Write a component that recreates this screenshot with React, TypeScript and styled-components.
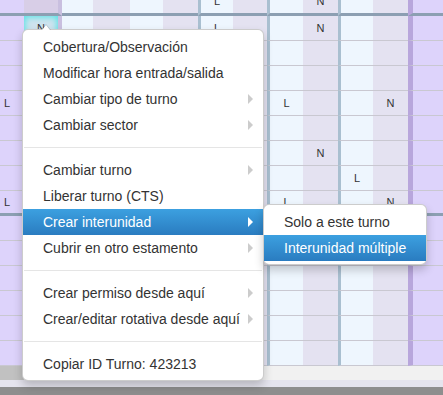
import React from 'react';
import styled, { createGlobalStyle, css } from 'styled-components';

type Tone = 'purple' | 'mauve' | 'blue' | 'lav';

interface Column {
  w: number;
  tone: Tone;
  line?: number;
  lineColor?: string;
  lineRight?: boolean;
}

interface Row {
  h: number;
  border: number;
  thick?: boolean;
}

const toneColors: Record<Tone, string> = {
  purple: '#ddd3fb',
  mauve: '#d8cee7',
  blue: '#eef6fe',
  lav: '#e4e2f1',
};

const columns: Column[] = [
  { w: 24, tone: 'purple' },
  { w: 38, tone: 'mauve', line: 4, lineColor: '#c9bfdf', lineRight: true },
  { w: 31, tone: 'blue' },
  { w: 37, tone: 'lav' },
  { w: 33, tone: 'blue' },
  { w: 35, tone: 'lav' },
  { w: 35, tone: 'blue', line: 3, lineColor: '#a9bfd0' },
  { w: 34, tone: 'lav' },
  { w: 36, tone: 'blue', line: 3, lineColor: '#a9bfd0' },
  { w: 35, tone: 'lav' },
  { w: 35, tone: 'blue', line: 3, lineColor: '#a9bfd0' },
  { w: 35, tone: 'lav' },
  { w: 35, tone: 'purple', line: 5, lineColor: '#b8a6dc' },
];

const rows: Row[] = [
  { h: 25, border: 3, thick: true },
  ...Array.from({ length: 7 }, () => ({ h: 24, border: 1 })),
  { h: 22, border: 3, thick: true },
  ...Array.from({ length: 6 }, () => ({ h: 24, border: 1 })),
];

// row index -> column index -> letter
const marks: Record<number, Record<number, string>> = {
  0: { 6: 'L', 9: 'N' },
  1: { 1: 'N', 6: 'L', 9: 'N' },
  4: { 0: 'L', 8: 'L', 11: 'N' },
  6: { 9: 'N' },
  7: { 10: 'L' },
  8: { 0: 'L', 8: 'L', 11: 'N' },
};

const GlobalStyle = createGlobalStyle`
  html, body {
    margin: 0;
    padding: 0;
  }
  body {
    width: 443px;
    height: 395px;
    overflow: hidden;
    background: #8e8e8e;
    font-family: "Liberation Sans", Arial, sans-serif;
  }
`;

const Page = styled.div`
  position: relative;
  width: 443px;
  height: 395px;
  display: flex;
  flex-direction: column;
`;

const GridArea = styled.div`
  height: 366px;
  overflow: hidden;
`;

const Grid = styled.div`
  display: grid;
  grid-template-columns: ${columns.map((c) => `${c.w}px`).join(' ')};
  grid-template-rows: ${rows.map((r) => `${r.h + r.border}px`).join(' ')};
  margin-top: -12px;
`;

const Cell = styled.div<{
  $tone: Tone;
  $border: number;
  $thick?: boolean;
  $line?: number;
  $lineColor?: string;
  $lineRight?: boolean;
  $selected?: boolean;
  $first?: boolean;
}>`
  box-sizing: border-box;
  display: flex;
  align-items: center;
  justify-content: center;
  padding-right: ${(p) => (p.$first ? '10px' : '0')};
  background: ${(p) => toneColors[p.$tone]};
  border-bottom: ${(p) => p.$border}px solid ${(p) => (p.$thick ? '#8c9fb2' : '#c9c8d1')};
  ${(p) =>
    p.$line &&
    css`
      border-${p.$lineRight ? 'right' : 'left'}: ${p.$line}px solid ${p.$lineColor};
    `}
  font-size: 11px;
  color: #333;
  ${(p) =>
    p.$selected &&
    css`
      background: #cfe3ee;
      box-shadow: inset 0 0 6px 1px #4fe4e6;
    `}
`;

const Scrollbar = styled.div`
  height: 14px;
  background: #f1f1f1;
  display: flex;
`;

const Thumb = styled.div`
  width: 170px;
  height: 100%;
  background: #c1c1c1;
`;

const Strip = styled.div`
  height: 7px;
  background: #e5e4ee;
`;

const Footer = styled.div`
  flex: 1;
  background: #8e8e8e;
`;

const Menu = styled.ul<{ $pointer?: boolean }>`
  position: absolute;
  box-sizing: border-box;
  margin: 0;
  padding: 4px 0 3px;
  list-style: none;
  background: #fff;
  border: 1px solid rgba(0, 0, 0, 0.2);
  border-radius: 6px;
  box-shadow: 0 5px 10px rgba(0, 0, 0, 0.2);
  font-size: 14px;
  color: #333;
  z-index: 10;
  ${(p) =>
    p.$pointer &&
    css`
      &::before {
        content: '';
        position: absolute;
        top: -6px;
        left: 18px;
        border-left: 5px solid transparent;
        border-right: 5px solid transparent;
        border-bottom: 6px solid rgba(0, 0, 0, 0.15);
      }
      &::after {
        content: '';
        position: absolute;
        top: -5px;
        left: 19px;
        border-left: 4px solid transparent;
        border-right: 4px solid transparent;
        border-bottom: 5px solid #fff;
      }
    `}
`;

const MainMenu = styled(Menu)`
  left: 22px;
  top: 29px;
  width: 242px;
`;

const SubMenu = styled(Menu)`
  left: 100%;
  top: -5px;
  width: 164px;
  z-index: 20;
`;

const Item = styled.li<{ $active?: boolean }>`
  position: relative;
  display: flex;
  align-items: center;
  padding: 3px 20px;
  line-height: 20px;
  white-space: nowrap;
  ${(p) =>
    p.$active &&
    css`
      color: #fff;
      background: linear-gradient(to bottom, #3ca0e0, #2a7cc0);
    `}
`;

const Caret = styled.span<{ $active?: boolean }>`
  margin-left: auto;
  margin-right: -10px;
  width: 0;
  height: 0;
  border-top: 5px solid transparent;
  border-bottom: 5px solid transparent;
  border-left: 5px solid ${(p) => (p.$active ? '#fff' : '#cccccc')};
`;

const Divider = styled.li`
  height: 1px;
  margin: 9px 1px;
  background: #e5e5e5;
`;

interface Entry {
  label: string;
  sub?: boolean;
  active?: boolean;
}

const groups: Entry[][] = [
  [
    { label: 'Cobertura/Observación' },
    { label: 'Modificar hora entrada/salida' },
    { label: 'Cambiar tipo de turno', sub: true },
    { label: 'Cambiar sector', sub: true },
  ],
  [
    { label: 'Cambiar turno', sub: true },
    { label: 'Liberar turno (CTS)' },
    { label: 'Crear interunidad', sub: true, active: true },
    { label: 'Cubrir en otro estamento', sub: true },
  ],
  [
    { label: 'Crear permiso desde aquí', sub: true },
    { label: 'Crear/editar rotativa desde aquí', sub: true },
  ],
  [{ label: 'Copiar ID Turno: 423213' }],
];

const App: React.FC = () => {
  return (
    <>
      <GlobalStyle />
      <Page>
        <GridArea>
          <Grid>
            {rows.map((row, r) =>
              columns.map((col, c) => (
                <Cell
                  key={`${r}-${c}`}
                  $tone={col.tone}
                  $border={row.border}
                  $thick={row.thick}
                  $line={col.line}
                  $lineColor={col.lineColor}
                  $lineRight={col.lineRight}
                  $selected={r === 1 && c === 1}
                  $first={c === 0}
                >
                  {marks[r]?.[c] ?? ''}
                </Cell>
              ))
            )}
          </Grid>
        </GridArea>
        <Scrollbar>
          <Thumb />
        </Scrollbar>
        <Strip />
        <Footer />

        <MainMenu $pointer>
          {groups.map((group, g) => (
            <React.Fragment key={g}>
              {g > 0 && <Divider />}
              {group.map((entry) => (
                <Item key={entry.label} $active={entry.active}>
                  {entry.label}
                  {entry.sub && <Caret $active={entry.active} />}
                  {entry.active && (
                    <SubMenu>
                      <Item>Solo a este turno</Item>
                      <Item $active>Interunidad múltiple</Item>
                    </SubMenu>
                  )}
                </Item>
              ))}
            </React.Fragment>
          ))}
        </MainMenu>
      </Page>
    </>
  );
};

export default App;
